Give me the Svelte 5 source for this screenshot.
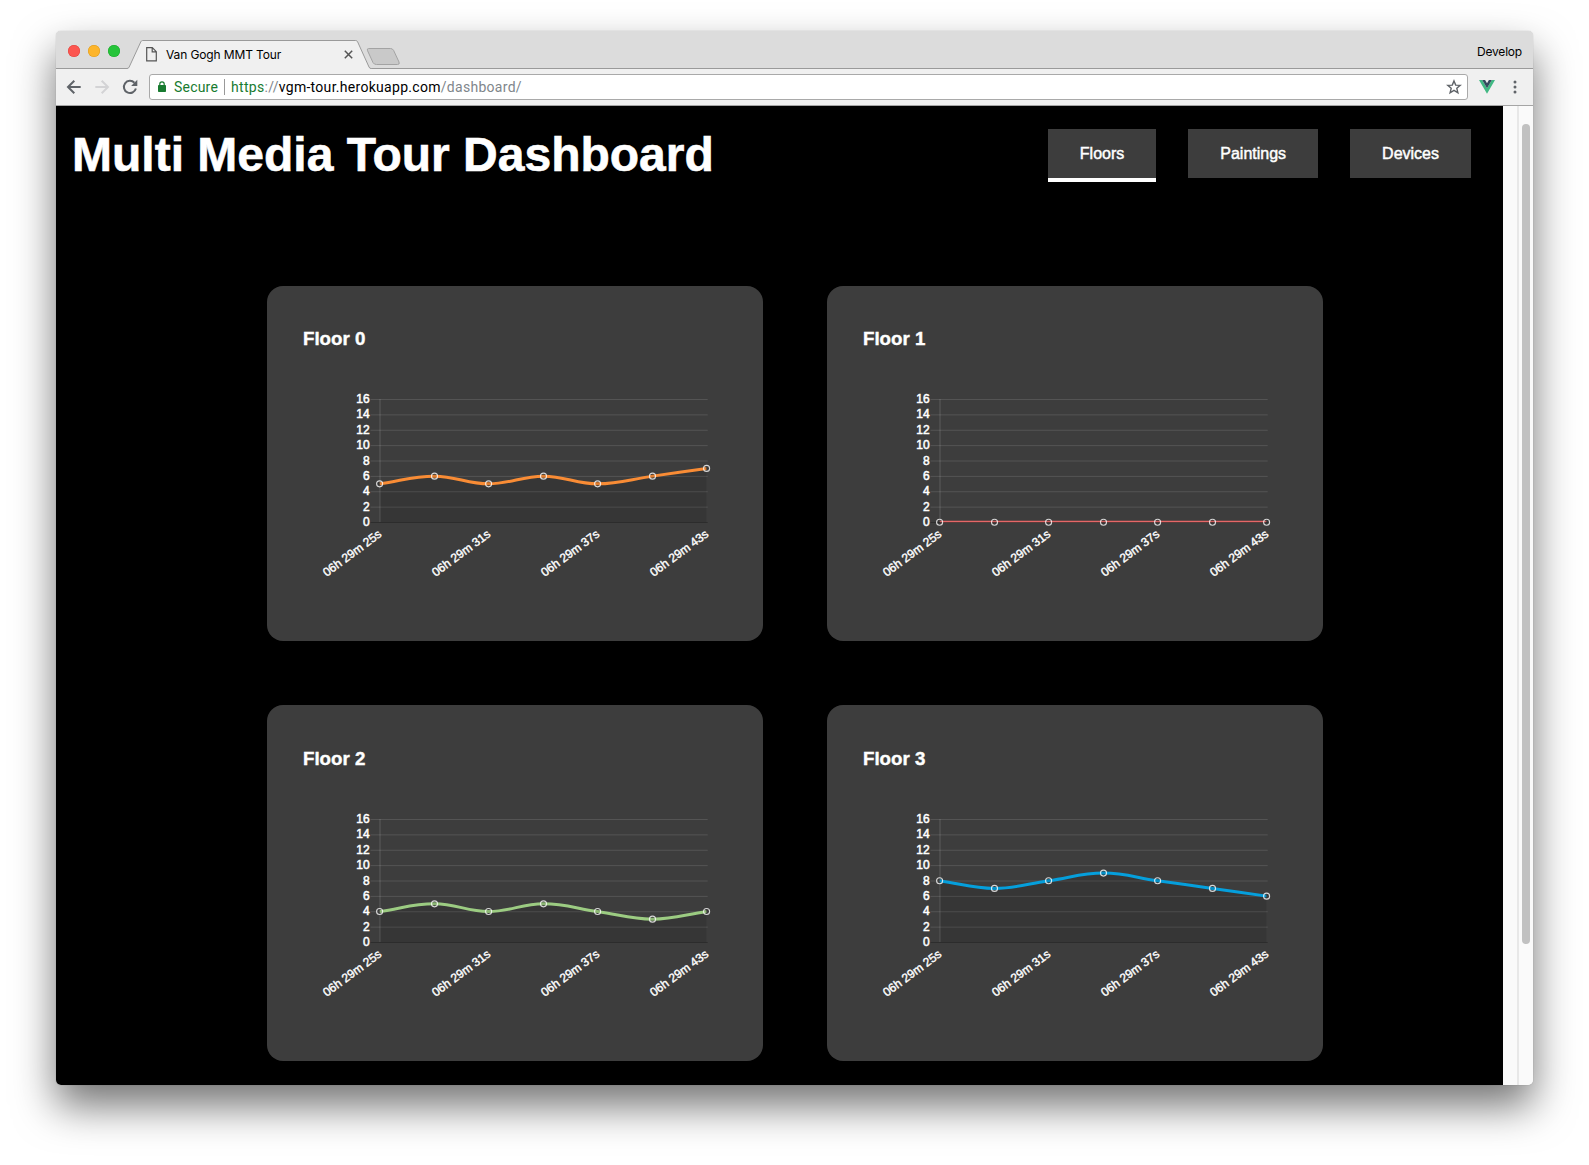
<script>
  const times = ['06h 29m 25s', '06h 29m 31s', '06h 29m 37s', '06h 29m 43s'];
  const ticks = [16, 14, 12, 10, 8, 6, 4, 2, 0];
  const tabs = ['Floors', 'Paintings', 'Devices'];
  let active = $state('Floors');

  const floors = [
    { name: 'Floor 0', color: '#f98c35', values: [5, 6, 5, 6, 5, 6, 7] },
    { name: 'Floor 1', color: '#e66767', values: [0, 0, 0, 0, 0, 0, 0] },
    { name: 'Floor 2', color: '#9ccc82', values: [4, 5, 4, 5, 4, 3, 4] },
    { name: 'Floor 3', color: '#059fdc', values: [8, 7, 8, 9, 8, 7, 6] }
  ];

  // Plot geometry inside the chart viewBox
  const left = 75.6;
  const step = 54.5;
  const base = 142.25;
  const unit = 7.6875;
  const tension = 0.4;

  const px = (i) => left + i * step + (i % 2 ? 0.4 : 0);
  const py = (v) => base - v * unit;
  const gridY = (t) => 142.5 - t * unit;

  // Smooth cubic spline through all of the points
  function curve(values) {
    const pts = values.map((v, i) => [px(i), py(v)]);
    const ctrl = pts.map((c, i) => {
      const p = pts[i - 1] ?? c;
      const n = pts[i + 1] ?? c;
      const a = Math.hypot(c[0] - p[0], c[1] - p[1]);
      const b = Math.hypot(n[0] - c[0], n[1] - c[1]);
      const fa = (tension * a) / (a + b);
      const fb = (tension * b) / (a + b);
      return {
        before: [c[0] - fa * (n[0] - p[0]), c[1] - fa * (n[1] - p[1])],
        after: [c[0] + fb * (n[0] - p[0]), c[1] + fb * (n[1] - p[1])]
      };
    });
    let d = `M${pts[0]}`;
    for (let i = 1; i < pts.length; i++) d += ` C${ctrl[i - 1].after} ${ctrl[i].before} ${pts[i]}`;
    return d;
  }
</script>

<div class="stage">
  <div class="window">
    <div class="strip">
      <div class="lights"><i class="red"></i><i class="amber"></i><i class="green"></i></div>
      <div class="tab">
        <svg class="tab-shape" width="276" height="38" viewBox="0 0 276 38">
          <path d="M0 38V37.5Q1.5 37.5 2.2 36L13.8 10.8Q14.4 9.5 15.7 9.5H228.7Q230 9.5 230.6 10.8L242 36Q242.6 37.5 244.2 37.5H246V38Z" fill="#f0f0f0" />
          <path d="M0 37.5Q1.5 37.5 2.2 36L13.8 10.8Q14.4 9.5 15.7 9.5H228.7Q230 9.5 230.6 10.8L242 36Q242.6 37.5 244.2 37.5H246" fill="none" stroke="#9a9a9a" />
          <path d="M241.6 17.5H263.5Q265.6 17.5 266.6 19.4L272 31Q273 33.5 270.5 33.5H249.5Q247 33.5 246 31.6L240.6 19.8Q239.6 17.5 241.6 17.5Z" fill="#c9c9c9" stroke="#a3a3a3" />
        </svg>
        <div class="tab-content">
          <svg width="11" height="15" viewBox="0 0 11 15"><path d="M.7.7H6.3L10.3 4.7V13.8H.7ZM6.2.9V4.9H10.2" fill="none" stroke="#555" stroke-width="1.2" /></svg>
          <span>Van Gogh MMT Tour</span>
          <svg class="close" width="9" height="9" viewBox="0 0 9 9"><path d="M.8.8L8.2 8.2M8.2.8L.8 8.2" stroke="#555" stroke-width="1.5" /></svg>
        </div>
      </div>
      <span class="profile">Develop</span>
    </div>

    <div class="toolbar">
      <svg width="16" height="16" viewBox="0 0 16 16"><path d="M14.7 8H2.5M8.3 1.7L2 8L8.3 14.3" fill="none" stroke="#5f6368" stroke-width="2" /></svg>
      <svg width="16" height="16" viewBox="0 0 16 16"><path d="M1.3 8H13.5M7.7 1.7L14 8L7.7 14.3" fill="none" stroke="#d3d3d5" stroke-width="2" /></svg>
      <svg width="16" height="16" viewBox="0 0 16 16"><path d="M13.9 9.6A6.1 6.1 0 1 1 12.4 3.7" fill="none" stroke="#5f6368" stroke-width="2" /><path d="M15.3.8V7H9.1Z" fill="#5f6368" /></svg>
      <div class="omnibox">
        <svg width="8" height="11" viewBox="0 0 8 11"><rect y="4" width="8" height="7" rx=".8" fill="#187b30" /><path d="M1.8 4.5V3A2.2 2.2 0 0 1 6.2 3V4.5" fill="none" stroke="#187b30" stroke-width="1.2" /></svg>
        <span class="secure">Secure</span>
        <span class="bar"></span>
        <span class="url"><span class="scheme">https</span><span class="dim">://</span>vgm-tour.herokuapp.com<span class="dim">/dashboard/</span></span>
        <svg class="star" width="16" height="16" viewBox="0 0 16 16"><path d="M8 1.9L9.7 6.1L14.2 6.4L10.8 9.3L11.9 13.8L8 11.4L4.1 13.8L5.2 9.3L1.8 6.4L6.3 6.1Z" fill="none" stroke="#5f6368" stroke-width="1.4" /></svg>
      </div>
      <svg class="vue" width="16" height="14" viewBox="0 0 16 14"><path d="M0 0H3.2L8 8.3L12.8 0H16L8 13.8Z" fill="#41b883" /><path d="M3.2 0H6.1L8 3.3L9.9 0H12.8L8 8.3Z" fill="#35495e" /></svg>
      <svg class="dots" width="16" height="16" viewBox="0 0 16 16"><circle cx="8" cy="3" r="1.5" /><circle cx="8" cy="8" r="1.5" /><circle cx="8" cy="13" r="1.5" /></svg>
    </div>

    <div class="body">
      <main>
        <header>
          <h1>Multi Media Tour Dashboard</h1>
          <nav>
            {#each tabs as tab}
              <button class:active={active === tab} onclick={() => (active = tab)}>{tab}</button>
            {/each}
          </nav>
        </header>
        <div class="cards">
          {#each floors as floor, f}
            <section class="card">
              <h3>{floor.name}</h3>
              <svg class="chart" width="424" height="221" viewBox="0 0 424 221">
                <clipPath id="plot-{f}"><rect x={left} y="19" width={step * 6} height={base - 19} /></clipPath>
                {#each ticks as t}
                  <line class={t ? 'grid' : 'grid zero'} x1="66.5" x2="403.7" y1={gridY(t)} y2={gridY(t)} />
                  <text class="tick" x="65.6" y={Math.round(gridY(t) + 3.55)}>{t}</text>
                {/each}
                <line class="grid axis" x1="76" x2="76" y1="19" y2="142" />
                <g clip-path="url(#plot-{f})">
                  <path class="area" d="{curve(floor.values)} V{base} H{left}Z" />
                  <path class="line" d={curve(floor.values)} stroke={floor.color} />
                </g>
                {#each floor.values as v, i}
                  <circle cx={px(i)} cy={py(v)} r="3" />
                {/each}
                {#each times as time, i}
                  <text class="time" transform="translate({px(i * 2) + 2.8} {base + 13.4}) rotate(-36.6)">{time}</text>
                {/each}
              </svg>
            </section>
          {/each}
        </div>
      </main>
      <div class="gutter"></div>
      <div class="scroll"><div class="thumb"></div></div>
    </div>
  </div>
</div>

<style>
  :global(body) { background: #fff; overflow: hidden; }
  .stage { box-sizing: border-box; width: 1589px; height: 1165px; padding: 31px 56px; overflow: hidden; }
  .window {
    display: flex; flex-direction: column; width: 1477px; height: 1054px; overflow: hidden;
    border-radius: 5px; background: #f0f0f0;
    box-shadow: 0 0 1px rgba(0, 0, 0, .35), 0 21px 42px rgba(0, 0, 0, .55);
  }
  svg { display: block; flex: none; }
  .strip { display: flex; height: 38px; background: #dcdcdc; box-shadow: inset 0 -1px #9a9a9a; }
  .lights { display: flex; gap: 8px; padding: 14px 0 0 12px; width: 59px; }
  .lights i { width: 12px; height: 12px; border-radius: 50%; }
  .lights .red { background: #fc5650; box-shadow: inset 0 0 0 .5px #df423d; }
  .lights .amber { background: #fdb52b; box-shadow: inset 0 0 0 .5px #dd9a1d; }
  .lights .green { background: #26c43a; box-shadow: inset 0 0 0 .5px #1aa82b; }
  .tab { display: grid; width: 276px; }
  .tab > * { grid-area: 1 / 1; }
  .tab-content { display: flex; align-items: center; gap: 9px; width: 208px; height: 15px; margin: 16px 0 0 19px; }
  .tab-content span { font: 12px/15px Inter, sans-serif; color: #000; white-space: nowrap; letter-spacing: -.12px; }
  .close { margin-left: auto; margin-right: 1px; }
  .profile { margin: 13px 11px 0 auto; font: 12px/15px Inter, sans-serif; letter-spacing: -.2px; color: #000; }
  .toolbar { box-sizing: border-box; display: flex; align-items: center; gap: 12px; height: 37px; padding: 0 10px 1px; background: #f0f0f0; border-bottom: 1px solid #a5a5a5; }
  .omnibox { box-sizing: border-box; display: flex; align-items: center; flex: 1; height: 26px; margin: 0 -1px; padding: 0 5px 0 8px; background: #fff; border: 1px solid #a9a9a9; border-radius: 3px; font: 14px/20px Roboto, sans-serif; white-space: nowrap; }
  .secure { margin-left: 8px; letter-spacing: .2px; color: #187b30; }
  .bar { width: 1px; height: 16px; margin: 0 6px; background: #999; }
  .url { letter-spacing: .29px; color: #000; }
  .scheme { color: #187b30; }
  .dim { color: #80868b; }
  .star { margin-left: auto; }
  .dots { fill: #5f6368; }
  .body { display: flex; flex: 1; background: #fafafa; }
  main { width: 1447px; background: #000; color: #fff; font-family: "Liberation Sans", Arial, sans-serif; overflow: hidden; }
  .gutter { width: 14px; }
  .scroll { box-sizing: border-box; width: 16px; border-left: 2px solid #e8e8e8; padding: 18px 0 0 3px; }
  .thumb { width: 8px; height: 820px; border-radius: 4px; background: #c1c1c1; }
  header { box-sizing: border-box; display: flex; justify-content: space-between; align-items: flex-start; height: 180px; padding: 23px 32px 0 16px; }
  h1 { margin: -2px 0 0; font-size: 48px; line-height: 55px; font-weight: 700; white-space: nowrap; -webkit-text-stroke: .6px #fff; }
  nav { display: flex; gap: 32px; }
  button { height: 49px; padding: 0 32px; border: 0; background: #3d3d3d; color: #fff; font: 16px/49px "Liberation Sans", Arial, sans-serif; -webkit-text-stroke: .45px #fff; }
  .active { box-shadow: 0 4px #fff; }
  .cards { display: grid; grid-template: 355px 356px / 496px 496px; gap: 64px; margin-left: 211px; }
  .card { display: flex; flex-direction: column; justify-content: flex-end; box-sizing: border-box; padding: 0 37px 40px 36px; border-radius: 16px; background: #3d3d3d; }
  h3 { margin: 0 0 30px; font-size: 18.72px; line-height: 22px; -webkit-text-stroke: .4px #fff; }
  .chart { margin-left: 1px; font: 12px "Liberation Sans", Arial, sans-serif; }
  .chart text { fill: #fff; text-anchor: end; stroke: #fff; stroke-width: .5px; }
  .chart .time { stroke-width: .4px; }
  .grid { stroke: rgba(255, 255, 255, .12); }
  .zero { stroke: rgba(0, 0, 0, .25); }
  .axis { stroke-width: 1.4; }
  .area { fill: rgba(0, 0, 0, .1); }
  .line { fill: none; stroke-width: 3; }
  .chart circle { fill: rgba(0, 0, 0, .1); stroke: rgba(255, 255, 255, .8); stroke-width: 1.15; }
</style>
